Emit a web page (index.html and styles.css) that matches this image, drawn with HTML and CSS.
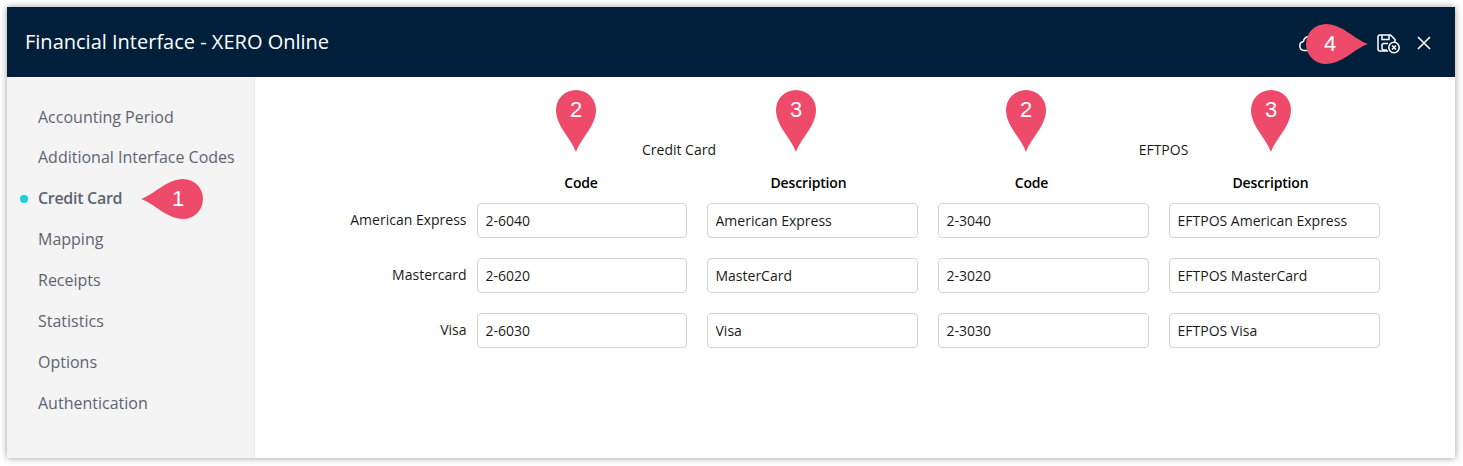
FILE: index.html
```html
<!DOCTYPE html>
<html lang="en">
<head>
<meta charset="utf-8">
<title>Financial Interface - XERO Online</title>
<link rel="stylesheet" href="styles.css">
</head>
<body>
<div class="window">
  <header class="header">
    <h1 class="title">Financial Interface - XERO Online</h1>
    <div class="actions">
      <svg class="icon-cloud" width="24" height="20" viewBox="0 0 24 20" fill="none" stroke="#fff" stroke-width="1.5"><path d="M6 17.5a4.5 4.5 0 0 1-.6-8.9A6 6 0 0 1 17 7.5a5 5 0 0 1 1 10z"/></svg>
      <svg class="icon-save" width="24" height="20" viewBox="0 0 24 20" fill="none" stroke="#fff" stroke-width="1.5"><path d="M11 17H3a2 2 0 0 1-2-2V3a2 2 0 0 1 2-2h10.5L18 5.5V9"/><path d="M5 1v4.5h7V1"/><path d="M11 9.5H7a2 2 0 0 0-2 2V14a2 2 0 0 0 2 2h3"/><circle cx="17" cy="13.5" r="5.2"/><path d="M15 11.5l4 4M19 11.5l-4 4"/></svg>
      <svg class="icon-close" width="14" height="14" viewBox="0 0 14 14" fill="none" stroke="#fff" stroke-width="1.6"><path d="M1 1l12 12M13 1L1 13"/></svg>
    </div>
  </header>
  <div class="body">
    <nav class="sidebar">
      <a class="nav-item">Accounting Period</a>
      <a class="nav-item">Additional Interface Codes</a>
      <a class="nav-item active">Credit Card</a>
      <a class="nav-item">Mapping</a>
      <a class="nav-item">Receipts</a>
      <a class="nav-item">Statistics</a>
      <a class="nav-item">Options</a>
      <a class="nav-item">Authentication</a>
    </nav>
    <main class="content">
      <div class="form-head">
        <div class="group-title group-cc">Credit Card</div>
        <div class="group-title group-ef">EFTPOS</div>
        <div class="col-head head-a">Code</div>
        <div class="col-head head-b">Description</div>
        <div class="col-head head-c">Code</div>
        <div class="col-head head-d">Description</div>
      </div>
      <div class="form-rows">
        <div class="row-label">American Express</div>
        <input class="field" value="2-6040">
        <input class="field" value="American Express">
        <input class="field" value="2-3040">
        <input class="field" value="EFTPOS American Express">

        <div class="row-label">Mastercard</div>
        <input class="field" value="2-6020">
        <input class="field" value="MasterCard">
        <input class="field" value="2-3020">
        <input class="field" value="EFTPOS MasterCard">

        <div class="row-label">Visa</div>
        <input class="field" value="2-6030">
        <input class="field" value="Visa">
        <input class="field" value="2-3030">
        <input class="field" value="EFTPOS Visa">
      </div>
    </main>
  </div>

  <div class="pin pin-h pin-1">
    <svg width="62" height="40" viewBox="0 0 62 40"><path class="pin-shape" d="M0 20C14 15 26 0 42 0a20 20 0 0 1 0 40C26 40 14 25 0 20z"/></svg>
    <span class="pin-num pin-num-right">1</span>
  </div>
  <div class="pin pin-v pin-2a">
    <svg width="40" height="62" viewBox="0 0 40 62"><path class="pin-shape" d="M20 62C15 48 0 36 0 20a20 20 0 0 1 40 0C40 36 25 48 20 62z"/></svg>
    <span class="pin-num pin-num-top">2</span>
  </div>
  <div class="pin pin-v pin-3a">
    <svg width="40" height="62" viewBox="0 0 40 62"><path class="pin-shape" d="M20 62C15 48 0 36 0 20a20 20 0 0 1 40 0C40 36 25 48 20 62z"/></svg>
    <span class="pin-num pin-num-top">3</span>
  </div>
  <div class="pin pin-v pin-2b">
    <svg width="40" height="62" viewBox="0 0 40 62"><path class="pin-shape" d="M20 62C15 48 0 36 0 20a20 20 0 0 1 40 0C40 36 25 48 20 62z"/></svg>
    <span class="pin-num pin-num-top">2</span>
  </div>
  <div class="pin pin-v pin-3b">
    <svg width="40" height="62" viewBox="0 0 40 62"><path class="pin-shape" d="M20 62C15 48 0 36 0 20a20 20 0 0 1 40 0C40 36 25 48 20 62z"/></svg>
    <span class="pin-num pin-num-top">3</span>
  </div>
  <div class="pin pin-h pin-4">
    <svg width="62" height="40" viewBox="0 0 62 40"><path class="pin-shape" d="M62 20C48 25 36 40 20 40a20 20 0 0 1 0-40C36 0 48 15 62 20z"/></svg>
    <span class="pin-num pin-num-left">4</span>
  </div>
</div>
</body>
</html>
```

FILE: styles.css
```css
* { box-sizing: border-box; }

html, body {
  margin: 0;
  height: 466px;
  overflow: hidden;
  background: #fff;
}

body {
  padding: 7px 8px 8px 7px;
  font-family: "Open Sans", "Liberation Sans", sans-serif;
}

.window {
  position: relative;
  height: 451px;
  display: flex;
  flex-direction: column;
  background: #fff;
  box-shadow: 0 0 7px rgba(0, 0, 0, 0.4);
}

.header {
  flex: 0 0 70px;
  display: flex;
  align-items: center;
  justify-content: space-between;
  padding: 0 24px 0 18px;
  background: #001f3a;
}

.title {
  margin: 0 0 1px;
  font-size: 20px;
  font-weight: 400;
  line-height: 28px;
  color: #fff;
}

.actions {
  display: flex;
  align-items: center;
}

.icon-cloud { margin-right: 55px; margin-top: 2px; }
.icon-save { margin-right: 16px; margin-top: 3px; }
.icon-close { margin-top: 2px; }

.body {
  flex: 1;
  display: flex;
  min-height: 0;
}

.sidebar {
  flex: 0 0 248px;
  padding-top: 19.55px;
  background: #f4f4f4;
  border-right: 1px solid #e9e9e9;
}

.nav-item {
  position: relative;
  display: block;
  height: 40.9px;
  padding-left: 31px;
  font-size: 16px;
  line-height: 40px;
  color: #5d6470;
}

.nav-item.active {
  font-weight: 600;
  letter-spacing: -0.3px;
}

.nav-item.active::before {
  content: "";
  position: absolute;
  left: 13px;
  top: 17px;
  width: 8px;
  height: 8px;
  border-radius: 50%;
  background: #17d1dc;
}

.content {
  flex: 1;
  padding: 62px 0 0 72px;
  font-size: 14px;
  color: #1b1b1b;
}

.form-head,
.form-rows {
  display: grid;
  grid-template-columns: 130px 210px repeat(3, 211px);
  column-gap: 20px;
}

.form-head {
  grid-template-rows: 33px 31px;
}

.form-rows {
  grid-auto-rows: 35px;
  row-gap: 20px;
}

.group-title {
  grid-row: 1;
  text-align: center;
  line-height: 22px;
}

.group-cc {
  grid-column: 2 / 4;
  padding-right: 37px;
}

.group-ef {
  grid-column: 4 / 6;
  padding-left: 9px;
}

.col-head {
  grid-row: 2;
  text-align: center;
  font-weight: 600;
  letter-spacing: -0.15px;
  line-height: 22px;
  color: #000;
}

.head-a { grid-column: 2; padding-right: 2px; }
.head-b { grid-column: 3; padding-right: 8px; }
.head-c { grid-column: 4; padding-right: 24px; }
.head-d { grid-column: 5; padding-right: 8px; }

.row-label {
  margin-right: -9.5px;
  text-align: right;
  line-height: 33px;
  white-space: nowrap;
}

.field {
  width: 100%;
  height: 35px;
  padding: 0 7.5px;
  border: 1px solid #d4d4d4;
  border-radius: 4px;
  background: #fff;
  font: 400 14px "Open Sans", "Liberation Sans", sans-serif;
  color: #1b1b1b;
}

.pin {
  position: absolute;
  display: block;
}

.pin svg { display: block; }
.pin-shape { fill: #ee4b6a; }

.pin-num {
  position: absolute;
  top: 0;
  width: 40px;
  height: 40px;
  font-family: "Liberation Sans", Arial, sans-serif;
  font-size: 22px;
  line-height: 40px;
  text-align: center;
  color: #fff;
}

.pin-num-top { left: 0; }
.pin-num-right { left: 17px; }
.pin-num-left { left: 4px; }

.pin-1 { left: 134px; top: 172px; }
.pin-2a { left: 549px; top: 83px; }
.pin-3a { left: 769px; top: 83px; }
.pin-2b { left: 999px; top: 83px; }
.pin-3b { left: 1244px; top: 83px; }
.pin-4 { left: 1299px; top: 17px; }
```
